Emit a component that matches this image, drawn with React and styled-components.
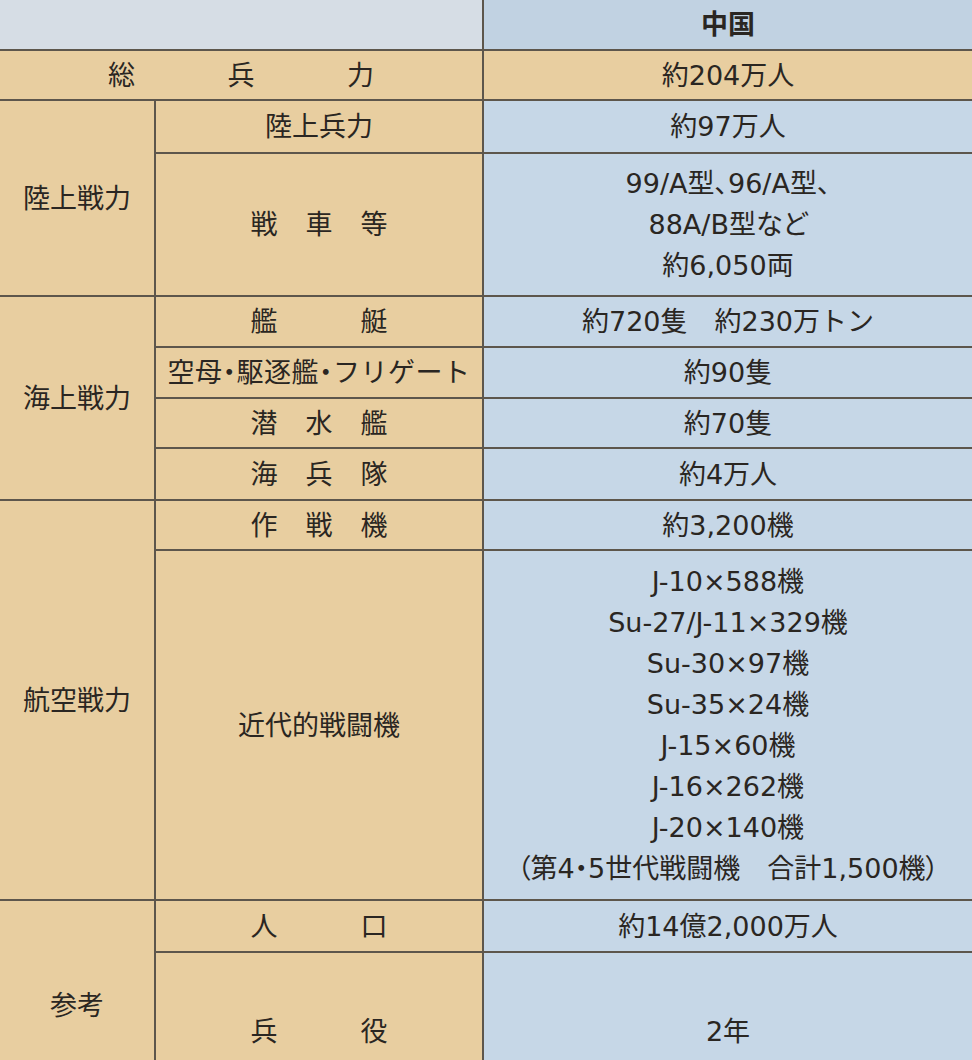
import React from "react";
import styled, { createGlobalStyle } from "styled-components";

const GlobalStyle = createGlobalStyle`
  html, body {
    margin: 0;
    padding: 0;
    overflow: hidden;
    background: #e8cea0;
  }
  body {
    font-family: "DejaVu Sans", "Noto Sans CJK JP", sans-serif;
    color: #2a2622;
  }
`;

const tones = {
  head: "#d6dde5",
  headBlue: "#c1d2e2",
  tan: "#e8cea0",
  blue: "#c6d7e7",
};

const Table = styled.div`
  width: 972px;
  display: grid;
  grid-template-columns: 154px 326px 1fr;
  grid-template-rows: 49px 48px 51px 141px 49px 49px 48px 50px 48px 348px 50px 157px;
  gap: 2px;
  background: #5d564c;
`;

const Cell = styled.div`
  background: ${(p) => tones[p.$tone]};
  grid-column: ${(p) => (p.$cols ? `span ${p.$cols}` : "auto")};
  grid-row: ${(p) => (p.$rows ? `span ${p.$rows}` : "auto")};
  display: flex;
  flex-direction: column;
  align-items: center;
  justify-content: center;
  font-size: 27px;
  line-height: 41px;
  font-weight: ${(p) => (p.$bold ? 700 : 400)};
  font-feature-settings: ${(p) => (p.$palt ? '"palt"' : "normal")};
  letter-spacing: ${(p) => p.$track || 0}px;
  white-space: nowrap;
  text-align: center;
`;

const Dot = styled.span`
  font-feature-settings: "palt";
`;

const Spaced = styled.div`
  width: ${(p) => p.$width}px;
  display: flex;
  justify-content: space-between;
`;

const Label = ({ text, width = 137 }) => (
  <Spaced $width={width}>
    {text.split("").map((c, i) => (
      <span key={i}>{c}</span>
    ))}
  </Spaced>
);

const fighters = [
  "J-10×588機",
  "Su-27/J-11×329機",
  "Su-30×97機",
  "Su-35×24機",
  "J-15×60機",
  "J-16×262機",
  "J-20×140機",
  "（第4・5世代戦闘機　合計1,500機）",
];

export default function App() {
  return (
    <>
      <GlobalStyle />
      <Table>
        <Cell $tone="head" $cols={2} />
        <Cell $tone="headBlue" $bold>
          中国
        </Cell>

        <Cell $tone="tan" $cols={2}>
          <Label text="総兵力" width={266} />
        </Cell>
        <Cell $tone="tan">約204万人</Cell>

        <Cell $tone="tan" $rows={2}>
          陸上戦力
        </Cell>
        <Cell $tone="tan">陸上兵力</Cell>
        <Cell $tone="blue">約97万人</Cell>
        <Cell $tone="tan">
          <Label text="戦車等" />
        </Cell>
        <Cell $tone="blue" $palt>
          <div>99/A型、96/A型、</div>
          <div>88A/B型など</div>
          <div>約6,050両</div>
        </Cell>

        <Cell $tone="tan" $rows={4}>
          海上戦力
        </Cell>
        <Cell $tone="tan">
          <Label text="艦艇" />
        </Cell>
        <Cell $tone="blue">約720隻　約230万トン</Cell>
        <Cell $tone="tan" $track={0.5}>
          <div>
            空母<Dot>・</Dot>駆逐艦<Dot>・</Dot>フリゲート
          </div>
        </Cell>
        <Cell $tone="blue">約90隻</Cell>
        <Cell $tone="tan">
          <Label text="潜水艦" />
        </Cell>
        <Cell $tone="blue">約70隻</Cell>
        <Cell $tone="tan">
          <Label text="海兵隊" />
        </Cell>
        <Cell $tone="blue">約4万人</Cell>

        <Cell $tone="tan" $rows={2}>
          航空戦力
        </Cell>
        <Cell $tone="tan">
          <Label text="作戦機" />
        </Cell>
        <Cell $tone="blue">約3,200機</Cell>
        <Cell $tone="tan">近代的戦闘機</Cell>
        <Cell $tone="blue" $palt>
          {fighters.map((f) => (
            <div key={f}>{f}</div>
          ))}
        </Cell>

        <Cell $tone="tan" $rows={2}>
          参考
        </Cell>
        <Cell $tone="tan">
          <Label text="人口" />
        </Cell>
        <Cell $tone="blue">約14億2,000万人</Cell>
        <Cell $tone="tan">
          <Label text="兵役" />
        </Cell>
        <Cell $tone="blue">2年</Cell>
      </Table>
    </>
  );
}
